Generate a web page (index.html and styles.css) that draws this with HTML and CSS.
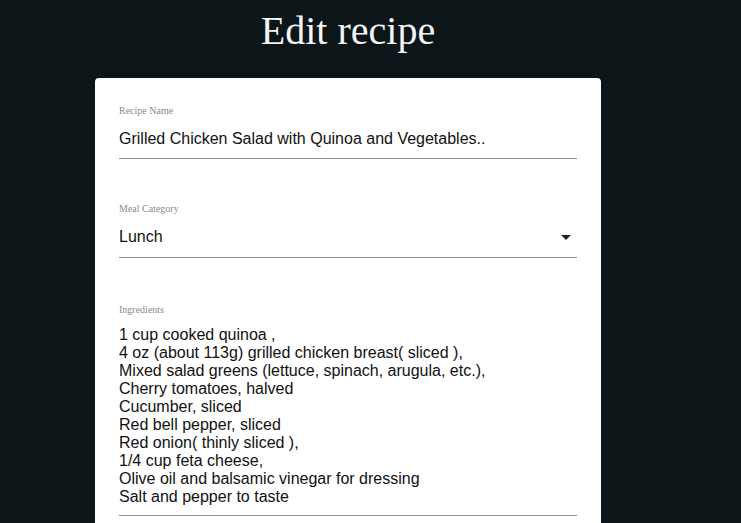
FILE: index.html
```html
<!DOCTYPE html>
<html>
<head>
<meta charset="utf-8">
<link rel="stylesheet" href="styles.css">
</head>
<body>
<main class="page">
  <h1 class="title">Edit recipe</h1>
  <form class="card">
    <div class="field">
      <label class="label">Recipe Name</label>
      <div class="control text">Grilled Chicken Salad with Quinoa and Vegetables..</div>
    </div>
    <div class="field field-select">
      <label class="label">Meal Category</label>
      <div class="control select">
        <span>Lunch</span>
        <svg class="arrow" width="10" height="5" viewBox="0 0 10 5"><path d="M0 0 L10 0 L5 5 Z" fill="#222"/></svg>
      </div>
    </div>
    <div class="field field-multi">
      <label class="label">Ingredients</label>
      <div class="control multi">1 cup cooked quinoa ,
4 oz (about 113g) grilled chicken breast( sliced ),
Mixed salad greens (lettuce, spinach, arugula, etc.),
Cherry tomatoes, halved
Cucumber, sliced
Red bell pepper, sliced
Red onion( thinly sliced ),
1/4 cup feta cheese,
Olive oil and balsamic vinegar for dressing
Salt and pepper to taste</div>
    </div>
  </form>
</main>
</body>
</html>
```
FILE: styles.css
```css
html, body {
  margin: 0;
  height: 100%;
  background: #0c1517;
  overflow: hidden;
}
.page {
  display: flex;
  flex-direction: column;
  align-items: center;
  padding-right: 45px;
}
.title {
  margin: 8px 0 0;
  font-family: "Liberation Serif", serif;
  font-weight: 400;
  font-size: 40px;
  line-height: 46px;
  color: #f4f4f4;
}
.card {
  margin-top: 24px;
  width: 506px;
  box-sizing: border-box;
  background: #fff;
  border-radius: 4px;
  padding: 27px 24px 40px;
  display: flex;
  flex-direction: column;
}
.field {
  display: flex;
  flex-direction: column;
  border-bottom: 1px solid #949494;
}
.field + .field { margin-top: 44px; }
.field-multi.field { margin-top: 46px; }
.label {
  font-family: "Liberation Serif", serif;
  font-size: 10px;
  line-height: 12px;
  color: #8a8a8a;
}
.control {
  font-family: "Liberation Sans", Arial, sans-serif;
  font-size: 16px;
  line-height: 18px;
  color: #111;
  margin-top: 11px;
  padding-bottom: 12px;
}
.text {
  margin-top: 13px;
  padding-bottom: 10px;
}
.select {
  margin-top: 13px;
  padding-bottom: 11px;
  display: flex;
  align-items: center;
  justify-content: space-between;
}
.arrow { margin-right: 6px; }
.multi {
  margin-top: 10px;
  padding-bottom: 9px;
  white-space: pre-line;
}
```
